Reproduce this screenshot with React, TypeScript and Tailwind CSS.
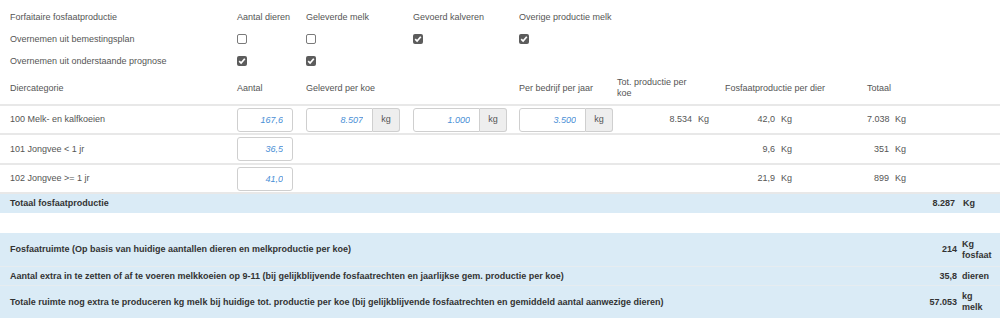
import React from 'react';

const GRID = 'grid grid-cols-[230px_69px_107px_106px_98px_108px_142px_140px] items-center';

function Check({ checked }: { checked: boolean }) {
  if (!checked) {
    return <span className="block w-[10px] h-[10px] rounded-[2px] border border-[#7a7a7a] bg-white" />;
  }
  return (
    <span className="flex w-[10px] h-[10px] rounded-[2px] bg-[#5c5c5c] items-center justify-center">
      <svg width="8" height="8" viewBox="0 0 8 8">
        <path d="M1.2 4.2 L3.1 6.1 L6.8 1.7" fill="none" stroke="#fff" strokeWidth="1.7" />
      </svg>
    </span>
  );
}

function AmountInput({ value }: { value: string }) {
  return (
    <input
      readOnly
      value={value}
      className="block w-[56px] h-[24px] rounded-[3px] border border-[#cfcfcf] bg-white pr-[9px] text-right italic text-[#4a8fd6] outline-none"
    />
  );
}

function KgInput({ value }: { value: string }) {
  return (
    <div className="flex h-[24px] w-[94px]">
      <input
        readOnly
        value={value}
        className="block w-[67px] h-full rounded-l-[3px] border border-[#cfcfcf] bg-white pr-[9px] text-right italic text-[#4a8fd6] outline-none"
      />
      <span className="flex w-[27px] h-full items-center justify-center rounded-r-[3px] border border-l-0 border-[#cfcfcf] bg-[#eeeeee] text-[#555]">
        kg
      </span>
    </div>
  );
}

function Val({ n, w }: { n: string; w: string }) {
  return (
    <div className="flex items-center pl-[7px]">
      <span className={`${w} text-right`}>{n}</span>
      <span className="ml-[6px]">Kg</span>
    </div>
  );
}

const rows = [
  { name: '100 Melk- en kalfkoeien', aantal: '167,6', perDier: '42,0', totaal: '7.038', melk: true, h: 'h-[29px]' },
  { name: '101 Jongvee < 1 jr', aantal: '36,5', perDier: '9,6', totaal: '351', melk: false, h: 'h-[30px]' },
  { name: '102 Jongvee >= 1 jr', aantal: '41,0', perDier: '21,9', totaal: '899', melk: false, h: 'h-[29px]' },
];

const ruimte = [
  { label: 'Fosfaatruimte (Op basis van huidige aantallen dieren en melkproductie per koe)', n: '214', unit: ['Kg', 'fosfaat'], h: 'h-[34px] border-b border-[#e6ecf0]' },
  { label: 'Aantal extra in te zetten of af te voeren melkkoeien op 9-11 (bij gelijkblijvende fosfaatrechten en jaarlijkse gem. productie per koe)', n: '35,8', unit: ['dieren'], h: 'h-[19px] border-b border-[#e6ecf0]' },
  { label: 'Totale ruimte nog extra te produceren kg melk bij huidige tot. productie per koe (bij gelijkblijvende fosfaatrechten en gemiddeld aantal aanwezige dieren)', n: '57.053', unit: ['kg', 'melk'], h: 'h-[32px]' },
];

export default function App() {
  return (
    <div className="w-[1004px] h-[320px] overflow-hidden bg-white pt-[6px] font-['Liberation_Sans',Arial,sans-serif] text-[9px] leading-[11px] text-[#555]">
      <div className="w-[1000px]">
        {/* forfaitaire instellingen */}
        <div className={`${GRID} h-[22px]`}>
          <div className="pl-[10px]">Forfaitaire fosfaatproductie</div>
          <div className="pl-[7px]">Aantal dieren</div>
          <div className="pl-[7px]">Geleverde melk</div>
          <div className="pl-[7px]">Gevoerd kalveren</div>
          <div className="pl-[7px] col-span-2">Overige productie melk</div>
        </div>
        <div className={`${GRID} h-[22px]`}>
          <div className="pl-[10px]">Overnemen uit bemestingsplan</div>
          <div className="pl-[7px]"><Check checked={false} /></div>
          <div className="pl-[7px]"><Check checked={false} /></div>
          <div className="pl-[7px]"><Check checked /></div>
          <div className="pl-[7px]"><Check checked /></div>
        </div>
        <div className={`${GRID} h-[22px]`}>
          <div className="pl-[10px]">Overnemen uit onderstaande prognose</div>
          <div className="pl-[7px]"><Check checked /></div>
          <div className="pl-[7px]"><Check checked /></div>
        </div>

        {/* tabel kop */}
        <div className={`${GRID} h-[34px] border-b-2 border-[#e8e8e8]`}>
          <div className="pl-[10px]">Diercategorie</div>
          <div className="pl-[7px]">Aantal</div>
          <div className="pl-[7px] col-span-2">Geleverd per koe</div>
          <div className="pl-[7px]">Per bedrijf per jaar</div>
          <div className="pl-[7px]"><span className="block w-[82px]">Tot. productie per koe</span></div>
          <div className="pl-[7px]">Fosfaatproductie per dier</div>
          <div className="pl-[7px]">Totaal</div>
        </div>

        {rows.map((r) => (
          <div key={r.name} className={`${GRID} ${r.h} border-b-2 border-[#e8e8e8]`}>
            <div className="pl-[10px]">{r.name}</div>
            <div className="pl-[7px]"><AmountInput value={r.aantal} /></div>
            <div className="pl-[7px]">{r.melk && <KgInput value="8.507" />}</div>
            <div className="pl-[7px]">{r.melk && <KgInput value="1.000" />}</div>
            <div className="pl-[7px]">{r.melk && <KgInput value="3.500" />}</div>
            <div>{r.melk && <Val n="8.534" w="w-[75px]" />}</div>
            <Val n={r.perDier} w="w-[50px]" />
            <Val n={r.totaal} w="w-[22px]" />
          </div>
        ))}

        <div className="flex h-[19px] items-center bg-[#daebf6] font-bold text-[#333]">
          <div className="flex-1 pl-[10px]">Totaal fosfaatproductie</div>
          <span className="text-right">8.287</span>
          <span className="w-[45px] pl-[8px]">Kg</span>
        </div>

        {/* fosfaatruimte */}
        <div className="mt-[20px] bg-[#daebf6] font-bold text-[#333]">
          {ruimte.map((r) => (
            <div key={r.label} className={`flex items-center ${r.h}`}>
              <div className="flex-1 pl-[10px]">{r.label}</div>
              <span className="text-right">{r.n}</span>
              <span className="w-[43px] pl-[5px] leading-[11px]">
                {r.unit.map((u) => (
                  <span key={u} className="block">{u}</span>
                ))}
              </span>
            </div>
          ))}
        </div>
      </div>
    </div>
  );
}
